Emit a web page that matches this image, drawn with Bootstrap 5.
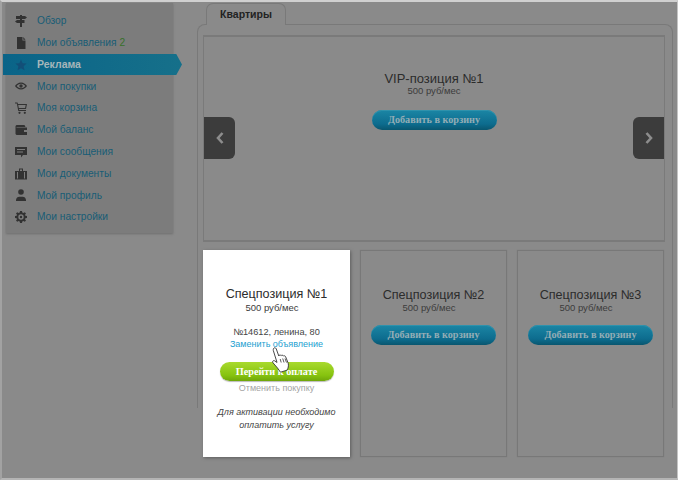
<!DOCTYPE html>
<html lang="en">
<head>
<meta charset="UTF-8">
<title>Реклама</title>
<link href="https://cdn.jsdelivr.net/npm/bootstrap@5.3.0/dist/css/bootstrap.min.css" rel="stylesheet">
<style>
    html, body { margin: 0; width: 678px; height: 480px; overflow: hidden; background: #8a8a8a; }
    body { font-family: "Liberation Sans", Arial, sans-serif; color: #2e2e2e; }
    .frame { width: 678px; height: 480px; background: #8a8a8a; border-top: 2px solid #d0d0d0; border-left: 2px solid #a2a2a2; border-right: 1px solid #c4c4c4; border-bottom: 2px solid #b4b4b4; }
    .side-col { width: 195px; flex: none; padding: 1px 0 0 4px; }
    .side-menu { width: 167px; height: 230px; margin: 0; padding: 7px 0 0; background: #7c7c7c; box-shadow: 0 1px 2px #6e6e6e; list-style: none; }
    .side-item { height: 21.8px; display: flex; align-items: center; font-size: 10.2px; color: #185c76; padding-left: 31px; position: relative; white-space: nowrap; }
    .side-item svg { position: absolute; left: 9px; top: 5px; width: 12px; height: 12px; fill: #323232; }
    .side-item b { color: #38702a; font-weight: normal; margin-left: 3px; }
    .side-item.on { margin-left: -3px; margin-right: -9px; padding-left: 34px; font-size: 10.5px; font-weight: bold; color: #a6b6ba; background: linear-gradient(90deg, #0a6488, #16708a); clip-path: polygon(0 0, 173px 0, 179px 50%, 173px 100%, 3px 100%, 3px calc(100% + 3px), 0 100%); }
    .side-item.on svg { left: 12px; fill: #124f78; }
    .main-col { width: 476px; flex: none; }
    .tab-head { width: 80px; height: 22px; margin: 1px 0 -1px 9px; border: 1px solid #797979; border-bottom: 0; border-radius: 7px 7px 0 0; background: #8a8a8a; font-size: 10.5px; font-weight: bold; color: #222; text-align: center; line-height: 20px; position: relative; z-index: 1; }
    .tab-body { height: 384px; padding: 10px 7px 0 5px; border: 1px solid #797979; border-bottom: 0; border-radius: 8px 8px 0 0; }
    .vip-box { height: 207px; border: 2px solid #7a7a7a; border-width: 2px 1px 2px 1px; position: relative; text-align: center; padding-top: 35px; margin-bottom: 8px; }
    .arrow-box { position: absolute; top: 80px; width: 31px; height: 42px; background: #3c3c3c; display: flex; align-items: center; justify-content: center; }
    .arrow-box svg { width: 10px; height: 14px; }
    .arrow-left { left: 0; border-radius: 0 6px 6px 0; }
    .arrow-right { right: 0; border-radius: 6px 0 0 6px; }
    .spot-row { display: flex; gap: 10px; }
    .spot-card { width: 147px; height: 207px; border: 1px solid #787878; box-shadow: 0 0 1px #7c7c7c; text-align: center; padding-top: 37px; position: relative; flex: none; }
    .spot-card.lit { background: #fff; border-color: #fff; box-shadow: 1px 1px 3px #5e5e5e; padding-top: 36px; }
    .spot-title { font-size: 12.6px; line-height: 14px; color: #2c2c2c; }
    .spot-card.lit .spot-title { line-height: 15px; }
    .vip-box .spot-title { font-size: 13px; }
    .spot-price { font-size: 9.5px; line-height: 12px; color: #3c3c3c; margin-right: 9px; }
    .vip-box .spot-price { margin: -1px 0 0; }
    .cart-btn { display: block; width: 125px; height: 20px; margin: 11px auto 0; padding: 0; border: 0; border-radius: 10px; background: linear-gradient(#1b86a5, #0d6c8e 70%, #09566f); box-shadow: inset 0 1px 0 #2f92ac; color: #93adb5; font: bold 10.2px/20px "Liberation Serif", serif; }
    .vip-box .cart-btn { margin-top: 13px; }
    .pay-btn { display: block; width: 114px; height: 19px; margin: 12px auto 0; padding: 0; border: 0; border-radius: 10px; background: linear-gradient(#a9da2e, #86c30f 70%, #6fa60a); box-shadow: 0 1px 1px #bbb; color: #fff; font: bold 10.2px/19px "Liberation Serif", serif; }
    .addr-line { font-size: 9.2px; line-height: 12px; color: #444; margin-top: 12px; }
    .swap-link { font-size: 9px; line-height: 12px; color: #1ca0d0; }
    .undo-link { font-size: 9px; line-height: 12px; color: #a4a4a4; margin-top: 1px; }
    .pay-note { font-size: 9px; line-height: 13px; font-style: italic; color: #444; margin-top: 12px; }
    .hand-cursor { position: absolute; left: 68px; top: 96px; width: 18px; height: 26px; }
</style>
</head>
<body>

<div class="frame d-flex">
    <!-- Sidebar -->
    <div class="side-col">
        <ul class="side-menu">
            <li class="side-item"><svg viewBox="0 0 12 12"><path d="M5 0h2v1h3l2 1.500L10 4H7v1h2.500v3H7v4H5V8H2L0 6.500 2 5h3V4H1V1h4z"/></svg>Обзор</li>
            <li class="side-item"><svg viewBox="0 0 12 12"><path d="M2 0h5.500L7.500 3.500H10.500V12H2z"/><path d="M8.300 0l2.200 2.700H8.300z"/></svg>Мои объявления<b>2</b></li>
            <li class="side-item on"><svg viewBox="0 0 12 12"><path d="M6 .5l1.600 3.800 4 .3-3 2.700.9 4L6 9.200 2.500 11.300l.9-4-3-2.700 4-.3z"/></svg>Реклама</li>
            <li class="side-item"><svg viewBox="0 0 12 12"><path fill-rule="evenodd" d="M6 2.500c2.800 0 5 2 6 3.500-1 1.500-3.200 3.500-6 3.500S1 7.500 0 6c1-1.500 3.200-3.500 6-3.500zM6 3.700C4 3.700 2.500 5 1.700 6 2.500 7 4 8.300 6 8.300S9.500 7 10.300 6C9.500 5 8 3.700 6 3.700z"/><circle cx="6" cy="6" r="1.700"/></svg>Мои покупки</li>
            <li class="side-item"><svg viewBox="0 0 12 12"><path fill-rule="evenodd" d="M0 .5h2.500l.5 1.500h9l-1 5H4l.2 1H11v1H3.300L1.800 1.500H0zM3.200 3l.6 3h6.300l.6-3z"/><circle cx="4.500" cy="10.800" r="1.100"/><circle cx="9.800" cy="10.800" r="1.100"/></svg>Моя корзина</li>
            <li class="side-item"><svg viewBox="0 0 12 12"><path fill-rule="evenodd" d="M1.500 1h8l1 2h-9v.5H12V11H1.500L.5 10V2zM9 6v2h3V6z"/></svg>Мой баланс</li>
            <li class="side-item"><svg viewBox="0 0 12 12"><path fill-rule="evenodd" d="M0 1h12v8H8l-2 2.500V9H0zm2 2v1h8V3zm0 2.500v1h6v-1z"/></svg>Мои сообщения</li>
            <li class="side-item"><svg viewBox="0 0 12 12"><path fill-rule="evenodd" d="M4 .5h4V3h4v8.500H0V3h4zM5 1.500V3h2V1.500zM2 4v6.500h1V4zm7 0v6.500h1V4z"/></svg>Мои документы</li>
            <li class="side-item"><svg viewBox="0 0 12 12"><circle cx="6" cy="3" r="2.800"/><path d="M1 12c0-1 0-3 1.800-4 1-.5 5.400-.5 6.400 0C11 9 11 11 11 12z"/></svg>Мой профиль</li>
            <li class="side-item"><svg viewBox="0 0 12 12"><path fill-rule="evenodd" d="M5 0h2l.3 1.600 1.100.5L9.800 1.200 11 2.500 10 3.800l.4 1 1.600.3v1.800l-1.600.3-.4 1 1 1.300-1.200 1.300-1.400-.9-1.100.5L7 12H5l-.3-1.600-1.100-.5-1.400.9L1 9.500l1-1.300-.4-1L0 6.900V5.100l1.600-.3.4-1-1-1.300 1.200-1.300 1.400.9 1.100-.5zM6 3.300a2.700 2.700 0 1 0 0 5.400 2.700 2.700 0 0 0 0-5.400z"/><circle cx="6" cy="6" r="1.200"/></svg>Мои настройки</li>
        </ul>
    </div>

    <!-- Tab and positions -->
    <div class="main-col">
        <div class="tab-head">Квартиры</div>
        <div class="tab-body">
            <div class="vip-box">
                <div class="spot-title">VIP-позиция №1</div>
                <div class="spot-price">500 руб/мес</div>
                <button class="cart-btn">Добавить в корзину</button>
                <div class="arrow-box arrow-left"><svg viewBox="0 0 10 14"><path d="M7.500 2L3 7l4.500 5" fill="none" stroke="#8d8d8d" stroke-width="2.600"/></svg></div>
                <div class="arrow-box arrow-right"><svg viewBox="0 0 10 14"><path d="M2.500 2L7 7l-4.500 5" fill="none" stroke="#8d8d8d" stroke-width="2.600"/></svg></div>
            </div>
            <div class="spot-row">
                <div class="spot-card lit">
                    <div class="spot-title">Спецпозиция №1</div>
                    <div class="spot-price">500 руб/мес</div>
                    <div class="addr-line">№14612, ленина, 80</div>
                    <div class="swap-link">Заменить объявление</div>
                    <button class="pay-btn">Перейти к оплате</button>
                    <div class="undo-link">Отменить покупку</div>
                    <div class="pay-note">Для активации необходимо<br>оплатить услугу</div>
                    <svg class="hand-cursor" viewBox="0 0 18 26"><path d="M1.500 1.500C2.300.4 3.700.6 4.200 1.700L6.800 9c.1-1 1.700-1.300 2.300-.3.500-.8 1.900-.6 2.300.3.600-.5 1.800-.3 2.200.7l2.600 6.500c.6 2.800 0 5-1.200 7l-6.500 2L5.500 21 .9 15.700c-.8-1.200.2-2.500 1.500-2l2.600 1.700L1.300 3.500c-.1-.8 0-1.500.2-2z" fill="#fff" stroke="#333" stroke-width=".9"/><path d="M8.200 12l1 3.500M10.700 11.500l1.300 4M13 11.500l1.500 4" stroke="#333" stroke-width=".8" fill="none"/></svg>
                </div>
                <div class="spot-card">
                    <div class="spot-title">Спецпозиция №2</div>
                    <div class="spot-price">500 руб/мес</div>
                    <button class="cart-btn">Добавить в корзину</button>
                </div>
                <div class="spot-card">
                    <div class="spot-title">Спецпозиция №3</div>
                    <div class="spot-price">500 руб/мес</div>
                    <button class="cart-btn">Добавить в корзину</button>
                </div>
            </div>
        </div>
    </div>
</div>

</body>
</html>
